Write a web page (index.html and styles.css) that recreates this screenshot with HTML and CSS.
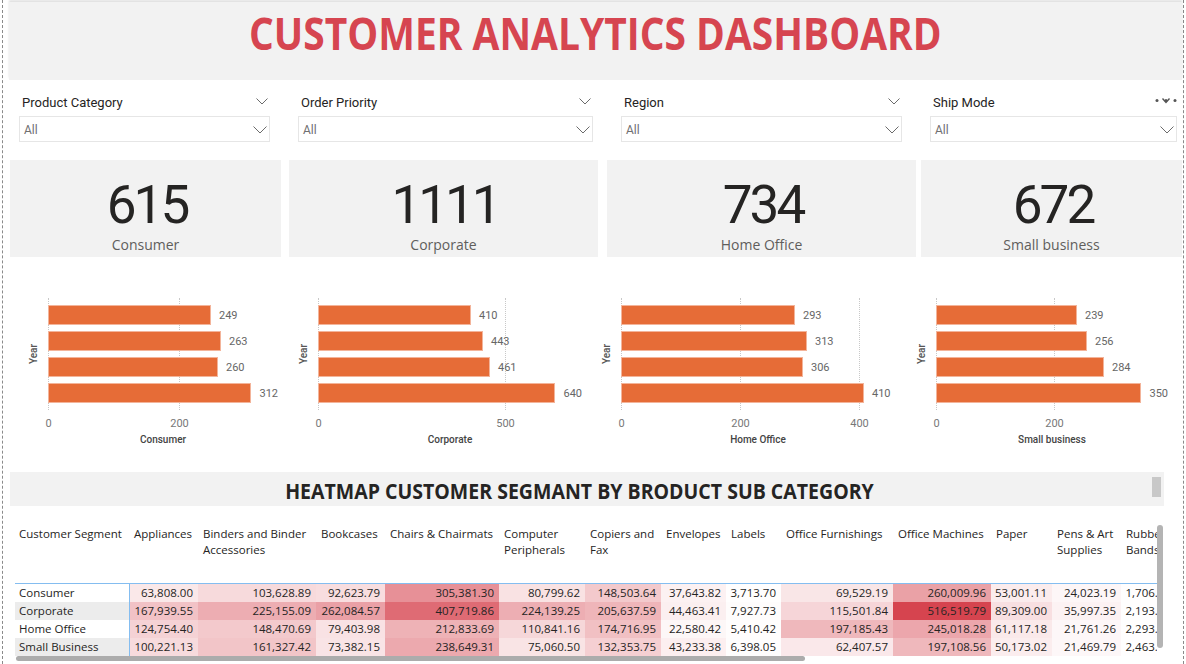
FILE: index.html
```html
<!DOCTYPE html>
<html lang="en">
<head>
<meta charset="utf-8">
<title>Customer Analytics Dashboard</title>
<link rel="stylesheet" href="styles.css">
</head>
<body>
<div class="page">
  <header class="title-box"><h1 class="title">CUSTOMER ANALYTICS DASHBOARD</h1></header>

  <section class="filters">
    <div class="slicer slicer-1">
      <div class="slicer-head"><span class="slicer-label">Product Category</span><svg class="chev-sm" viewBox="0 0 12 7"><polyline points="0.5,0.5 6,6 11.5,0.5"/></svg></div>
      <div class="dropdown"><span class="dd-value">All</span><svg class="chev-lg" viewBox="0 0 14 8"><polyline points="0.5,0.5 7,7 13.5,0.5"/></svg></div>
    </div>
    <div class="slicer slicer-2">
      <div class="slicer-head"><span class="slicer-label">Order Priority</span><svg class="chev-sm" viewBox="0 0 12 7"><polyline points="0.5,0.5 6,6 11.5,0.5"/></svg></div>
      <div class="dropdown"><span class="dd-value">All</span><svg class="chev-lg" viewBox="0 0 14 8"><polyline points="0.5,0.5 7,7 13.5,0.5"/></svg></div>
    </div>
    <div class="slicer slicer-3">
      <div class="slicer-head"><span class="slicer-label">Region</span><svg class="chev-sm" viewBox="0 0 12 7"><polyline points="0.5,0.5 6,6 11.5,0.5"/></svg></div>
      <div class="dropdown"><span class="dd-value">All</span><svg class="chev-lg" viewBox="0 0 14 8"><polyline points="0.5,0.5 7,7 13.5,0.5"/></svg></div>
    </div>
    <div class="slicer slicer-4">
      <div class="slicer-head"><span class="slicer-label">Ship Mode</span><svg class="more" viewBox="0 0 22 8"><circle cx="2" cy="3.5" r="1.5"/><circle cx="11" cy="3.5" r="1.5"/><circle cx="20" cy="3.5" r="1.5"/><polyline points="7.5,1.5 11,5.5 14.5,1.5"/></svg></div>
      <div class="dropdown"><span class="dd-value">All</span><svg class="chev-lg" viewBox="0 0 14 8"><polyline points="0.5,0.5 7,7 13.5,0.5"/></svg></div>
    </div>
  </section>

  <section class="cards">
    <div class="card card-1"><div class="card-value">615</div><div class="card-label">Consumer</div></div>
    <div class="card card-2"><div class="card-value">1111</div><div class="card-label">Corporate</div></div>
    <div class="card card-3"><div class="card-value">734</div><div class="card-label">Home Office</div></div>
    <div class="card card-4"><div class="card-value">672</div><div class="card-label">Small business</div></div>
  </section>

  <section class="charts">
    <div class="chart chart-1">
      <div class="ylab"><span>Year</span></div>
      <div class="chart-body">
        <div class="plot">
          <span class="grid" style="left:0"></span>
          <span class="grid" style="left:131px"></span>
          <div class="bars">
            <div class="bar-row"><div class="bar" style="width:163px"></div><span class="bar-val">249</span></div>
            <div class="bar-row"><div class="bar" style="width:173px"></div><span class="bar-val">263</span></div>
            <div class="bar-row"><div class="bar" style="width:170px"></div><span class="bar-val">260</span></div>
            <div class="bar-row"><div class="bar" style="width:204px"></div><span class="bar-val">312</span></div>
          </div>
        </div>
        <div class="ticks"><span class="tick" style="left:0.5px">0</span><span class="tick" style="left:131.5px">200</span></div>
        <div class="axis-title">Consumer</div>
      </div>
    </div>
    <div class="chart chart-2">
      <div class="ylab"><span>Year</span></div>
      <div class="chart-body">
        <div class="plot">
          <span class="grid" style="left:0"></span>
          <span class="grid" style="left:187px"></span>
          <div class="bars">
            <div class="bar-row"><div class="bar" style="width:153px"></div><span class="bar-val">410</span></div>
            <div class="bar-row"><div class="bar" style="width:165px"></div><span class="bar-val">443</span></div>
            <div class="bar-row"><div class="bar" style="width:172px"></div><span class="bar-val">461</span></div>
            <div class="bar-row"><div class="bar" style="width:238px"></div><span class="bar-val">640</span></div>
          </div>
        </div>
        <div class="ticks"><span class="tick" style="left:0.5px">0</span><span class="tick" style="left:187.5px">500</span></div>
        <div class="axis-title">Corporate</div>
      </div>
    </div>
    <div class="chart chart-3">
      <div class="ylab"><span>Year</span></div>
      <div class="chart-body">
        <div class="plot">
          <span class="grid" style="left:0"></span>
          <span class="grid" style="left:119px"></span>
          <span class="grid" style="left:238px"></span>
          <div class="bars">
            <div class="bar-row"><div class="bar" style="width:174px"></div><span class="bar-val">293</span></div>
            <div class="bar-row"><div class="bar" style="width:186px"></div><span class="bar-val">313</span></div>
            <div class="bar-row"><div class="bar" style="width:182px"></div><span class="bar-val">306</span></div>
            <div class="bar-row"><div class="bar" style="width:243px"></div><span class="bar-val">410</span></div>
          </div>
        </div>
        <div class="ticks"><span class="tick" style="left:0.5px">0</span><span class="tick" style="left:119.5px">200</span><span class="tick" style="left:238.5px">400</span></div>
        <div class="axis-title">Home Office</div>
      </div>
    </div>
    <div class="chart chart-4">
      <div class="ylab"><span>Year</span></div>
      <div class="chart-body">
        <div class="plot">
          <span class="grid" style="left:0"></span>
          <span class="grid" style="left:118px"></span>
          <div class="bars">
            <div class="bar-row"><div class="bar" style="width:141px"></div><span class="bar-val">239</span></div>
            <div class="bar-row"><div class="bar" style="width:151px"></div><span class="bar-val">256</span></div>
            <div class="bar-row"><div class="bar" style="width:168px"></div><span class="bar-val">284</span></div>
            <div class="bar-row"><div class="bar" style="width:206px"></div><span class="bar-val">350</span></div>
          </div>
        </div>
        <div class="ticks"><span class="tick" style="left:0.5px">0</span><span class="tick" style="left:118.5px">200</span></div>
        <div class="axis-title">Small business</div>
      </div>
    </div>
  </section>

  <section class="heatmap">
    <div class="hm-band"><h2 class="hm-title">HEATMAP CUSTOMER SEGMANT BY BRODUCT SUB CATEGORY</h2><span class="band-thumb"></span></div>
    <div class="table-wrap">
      <table class="hm-table">
        <colgroup>
          <col class="c-seg"><col class="c-app"><col class="c-bind"><col class="c-book"><col class="c-chair"><col class="c-comp"><col class="c-copy"><col class="c-env"><col class="c-lab"><col class="c-of"><col class="c-om"><col class="c-pap"><col class="c-pens"><col class="c-rub">
        </colgroup>
        <thead>
          <tr>
            <th class="seg">Customer Segment</th><th>Appliances</th><th>Binders and Binder Accessories</th><th>Bookcases</th><th>Chairs &amp; Chairmats</th><th>Computer Peripherals</th><th>Copiers and Fax</th><th>Envelopes</th><th>Labels</th><th>Office Furnishings</th><th>Office Machines</th><th>Paper</th><th>Pens &amp; Art Supplies</th><th>Rubber Bands</th>
          </tr>
        </thead>
        <tbody>
          <tr>
            <td class="seg">Consumer</td>
            <td style="background:rgb(250,232,233)">63,808.00</td>
            <td style="background:rgb(247,218,220)">103,628.89</td>
            <td style="background:rgb(248,221,223)">92,623.79</td>
            <td style="background:rgb(231,144,151)">305,381.30</td>
            <td style="background:rgb(249,226,227)">80,799.62</td>
            <td style="background:rgb(243,201,204)">148,503.64</td>
            <td style="background:rgb(252,241,242)">37,643.82</td>
            <td style="background:rgb(255,254,254)">3,713.70</td>
            <td style="background:rgb(249,230,231)">69,529.19</td>
            <td style="background:rgb(234,161,166)">260,009.96</td>
            <td style="background:rgb(251,236,237)">53,001.11</td>
            <td style="background:rgb(253,246,247)">24,023.19</td>
            <td style="background:rgb(255,254,254)">1,706.05</td>
          </tr>
          <tr class="alt">
            <td class="seg">Corporate</td>
            <td style="background:rgb(242,194,198)">167,939.55</td>
            <td style="background:rgb(237,173,178)">225,155.09</td>
            <td style="background:rgb(234,160,166)">262,084.57</td>
            <td style="background:rgb(223,107,116)">407,719.86</td>
            <td style="background:rgb(237,174,179)">224,139.25</td>
            <td style="background:rgb(239,181,185)">205,637.59</td>
            <td style="background:rgb(251,239,240)">44,463.41</td>
            <td style="background:rgb(254,252,252)">7,927.73</td>
            <td style="background:rgb(246,213,216)">115,501.84</td>
            <td style="background:rgb(214,68,79)">516,519.79</td>
            <td style="background:rgb(248,223,225)">89,309.00</td>
            <td style="background:rgb(252,242,243)">35,997.35</td>
            <td style="background:rgb(255,254,254)">2,193.77</td>
          </tr>
          <tr>
            <td class="seg">Home Office</td>
            <td style="background:rgb(245,210,213)">124,754.40</td>
            <td style="background:rgb(243,201,204)">148,470.69</td>
            <td style="background:rgb(249,226,228)">79,403.98</td>
            <td style="background:rgb(238,178,182)">212,833.69</td>
            <td style="background:rgb(246,215,217)">110,841.16</td>
            <td style="background:rgb(241,192,195)">174,716.95</td>
            <td style="background:rgb(253,247,247)">22,580.42</td>
            <td style="background:rgb(255,253,253)">5,410.42</td>
            <td style="background:rgb(239,184,188)">197,185.43</td>
            <td style="background:rgb(236,166,172)">245,018.28</td>
            <td style="background:rgb(250,233,234)">61,117.18</td>
            <td style="background:rgb(253,247,248)">21,761.26</td>
            <td style="background:rgb(255,254,254)">2,293.96</td>
          </tr>
          <tr class="alt">
            <td class="seg">Small Business</td>
            <td style="background:rgb(247,219,221)">100,221.13</td>
            <td style="background:rgb(242,197,200)">161,327.42</td>
            <td style="background:rgb(249,228,230)">73,382.15</td>
            <td style="background:rgb(236,169,174)">238,649.31</td>
            <td style="background:rgb(249,228,229)">75,060.50</td>
            <td style="background:rgb(245,207,210)">132,353.75</td>
            <td style="background:rgb(252,239,240)">43,233.38</td>
            <td style="background:rgb(254,253,253)">6,398.05</td>
            <td style="background:rgb(250,232,234)">62,407.57</td>
            <td style="background:rgb(239,184,188)">197,108.56</td>
            <td style="background:rgb(251,237,238)">50,173.02</td>
            <td style="background:rgb(253,247,248)">21,469.79</td>
            <td style="background:rgb(255,254,254)">2,463.75</td>
          </tr>
        </tbody>
      </table>
    </div>
    <div class="hthumb"></div>
    <span class="vthumb"></span>
  </section>
</div>
</body>
</html>
```

FILE: styles.css
```css
* { box-sizing: border-box; }
html, body { margin: 0; padding: 0; }
body {
  width: 1186px;
  height: 664px;
  overflow: hidden;
  background: #ffffff;
  font-family: "Open Sans", "Noto Sans", sans-serif;
  color: #252423;
}
.page {
  margin-left: 2px;
  width: 1182px;
  height: 664px;
  border-left: 1px dashed #8a8a8a;
  border-right: 1px dashed #8a8a8a;
  padding-top: 2px;
}

/* Title */
.title-box {
  margin: 0 1px 0 6px;
  height: 78px;
  background: #f2f2f2;
  box-shadow: 0 -2px 2px rgba(0, 0, 0, 0.12);
  text-align: center;
  padding-top: 9px;
}
.title {
  display: inline-block;
  margin: 0;
  font-family: "Open Sans", sans-serif;
  font-size: 44px;
  line-height: 44px;
  font-weight: 700;
  color: #d64550;
  transform: scaleX(0.885);
}

/* Slicers */
.filters {
  display: flex;
  gap: 28px;
  padding: 15px 0 0 16px;
}
.slicer-1 { width: 251px; }
.slicer-2 { width: 295px; }
.slicer-3 { width: 281px; }
.slicer-4 { width: 247px; }
.slicer-head {
  height: 16px;
  display: flex;
  align-items: center;
  justify-content: space-between;
  padding: 0 2px 0 3px;
}
.slicer-label {
  font-family: Roboto, sans-serif;
  font-size: 13px;
  line-height: 16px;
  color: #252423;
}
.chev-sm { width: 12px; height: 7px; margin-top: -4px; }
.chev-lg { width: 14px; height: 8px; }
.more { width: 22px; height: 8px; margin-top: -4px; margin-right: -2px; }
.more circle { fill: #555555; }
svg polyline { fill: none; stroke: #6b6b6b; stroke-width: 1; }
.more polyline { stroke: #555555; stroke-width: 1.4; }
.dropdown {
  margin-top: 5px;
  height: 26px;
  border: 1px solid #e6e6e6;
  display: flex;
  align-items: center;
  justify-content: space-between;
  padding: 2px 2px 0 4px;
}
.dd-value {
  font-family: Roboto, sans-serif;
  font-size: 12px;
  color: #707070;
}

/* KPI cards */
.cards {
  display: flex;
  margin-top: 18px;
  padding-left: 7px;
}
.card {
  height: 97px;
  background: #f2f2f2;
  display: flex;
  flex-direction: column;
  align-items: center;
  padding-top: 19px;
}
.card-1 { width: 271px; }
.card-2 { width: 309px; margin-left: 8px; }
.card-3 { width: 309px; margin-left: 9px; }
.card-4 { width: 261px; margin-left: 5px; }
.card-value {
  font-family: Roboto, sans-serif;
  font-size: 53px;
  line-height: 53px;
  font-weight: 400;
  color: #252423;
  letter-spacing: -3px;
  text-indent: 3px;
}
.card-label {
  margin-top: 4px;
  font-family: "Open Sans", sans-serif;
  font-size: 14px;
  line-height: 18px;
  color: #605e5c;
}

/* Bar charts */
.charts {
  display: grid;
  grid-template-columns: 270px 303px 315px 1fr;
  margin-top: 41px;
  padding-left: 20px;
}
.chart { display: flex; }
.ylab {
  width: 20px;
  margin-right: 5px;
  height: 112px;
  display: flex;
  align-items: center;
  justify-content: center;
}
.ylab span {
  writing-mode: vertical-rl;
  transform: rotate(180deg);
  font-family: Roboto, sans-serif;
  font-size: 10px;
  font-weight: 500;
  color: #555555;
}
.chart-1 .chart-body { width: 230px; }
.chart-2 .chart-body { width: 264px; }
.chart-3 .chart-body { width: 274px; }
.chart-4 .chart-body { width: 232px; }
.plot {
  position: relative;
  height: 112px;
  padding-top: 7px;
}
.grid {
  position: absolute;
  top: 0;
  bottom: 0;
  border-left: 1px dotted #c8c8c8;
}
.bars {
  position: relative;
  display: flex;
  flex-direction: column;
  gap: 6px;
}
.bar-row {
  display: flex;
  align-items: center;
  height: 20px;
}
.bar {
  height: 20px;
  background: #e66c37;
  border: 1px solid #f3b49a;
}
.bar-val {
  margin-left: 8px;
  font-family: Roboto, sans-serif;
  font-size: 11px;
  color: #666666;
}
.ticks {
  position: relative;
  height: 21px;
}
.tick {
  position: absolute;
  top: 7px;
  transform: translateX(-50%);
  font-family: Roboto, sans-serif;
  font-size: 11px;
  line-height: 14px;
  color: #777777;
}
.axis-title {
  margin-top: 3px;
  text-align: center;
  font-family: Roboto, sans-serif;
  font-size: 10px;
  line-height: 12px;
  font-weight: 500;
  color: #444444;
}

/* Heatmap */
.heatmap {
  position: relative;
  margin-top: 26px;
}
.hm-band {
  position: relative;
  margin-left: 7px;
  width: 1154px;
  height: 34px;
  background: #f2f2f2;
  text-align: center;
  padding: 8px 15px 0 0;
}
.hm-title {
  display: inline-block;
  margin: 0;
  font-family: "Open Sans", sans-serif;
  font-size: 21px;
  line-height: 22px;
  font-weight: 700;
  color: #252423;
  transform: scaleX(0.93);
}
.band-thumb {
  position: absolute;
  right: 3px;
  top: 5px;
  width: 9px;
  height: 20px;
  background: #c8c8c8;
}
.table-wrap {
  margin: 19px 0 0 12px;
  width: 1142px;
  height: 131px;
  overflow: hidden;
}
.hm-table {
  width: 1161px;
  table-layout: fixed;
  border-collapse: collapse;
  font-family: "Open Sans", sans-serif;
  font-size: 11.5px;
  color: #252423;
}
.c-seg { width: 114px; }
.c-app { width: 69px; }
.c-bind { width: 118px; }
.c-book { width: 69px; }
.c-chair { width: 114px; }
.c-comp { width: 86px; }
.c-copy { width: 76px; }
.c-env { width: 65px; }
.c-lab { width: 55px; }
.c-of { width: 112px; }
.c-om { width: 98px; }
.c-pap { width: 61px; }
.c-pens { width: 69px; }
.c-rub { width: 55px; }
.hm-table th {
  text-align: left;
  vertical-align: top;
  font-weight: 400;
  line-height: 16px;
  height: 58px;
  padding: 1px 2px 0 5px;
  border-bottom: 1px solid #84bdf0;
}
.hm-table td {
  height: 18.3px;
  line-height: 18px;
  padding: 0 5px 0 0;
  text-align: right;
  white-space: nowrap;
  overflow: hidden;
}
.hm-table th.seg { padding-left: 4px; }
.hm-table td.seg {
  text-align: left;
  padding-left: 4px;
  border-right: 1px solid #84bdf0;
}
.hm-table tr.alt td.seg { background: #ececec; }
.hthumb {
  margin-left: 13px;
  width: 789px;
  height: 5px;
  border-radius: 3px;
  background: #acacac;
}
.vthumb {
  position: absolute;
  left: 1154px;
  top: 53px;
  width: 6px;
  height: 123px;
  border-radius: 3px;
  background: #b4b4b4;
}
```
